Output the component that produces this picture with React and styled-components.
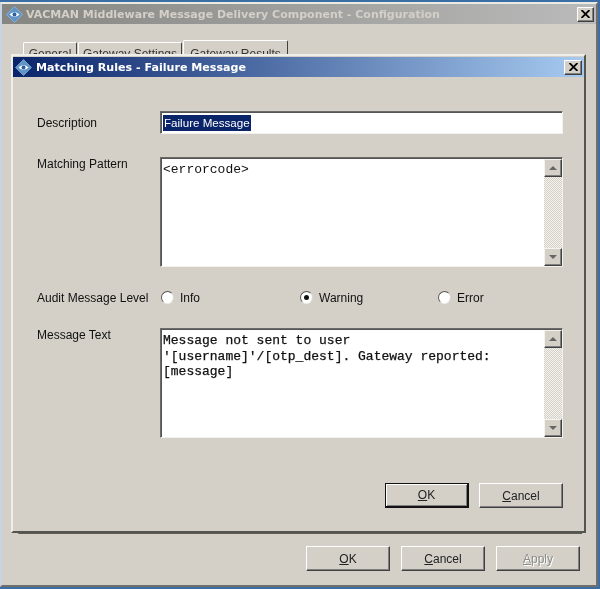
import React from 'react'
import styled, { createGlobalStyle } from 'styled-components'

const Global = createGlobalStyle`
    html, body {
        margin: 0;
        padding: 0;
        background: #3a6ea5;
    }
    body {
        font-family: "Liberation Sans", Arial, sans-serif;
        font-size: 12px;
        color: #111;
    }
`

function AppIcon() {
    return (
        <svg width="17" height="17" viewBox="0 0 17 17">
            <path d="M8.5 0.5 L16.5 8.5 L8.5 16.5 L0.5 8.5 Z" fill="#5f95c8" stroke="#9cc0e0" strokeWidth="0.6" />
            <path d="M3.5 8.5 Q8.5 3.8 13.5 8.5 Q8.5 13.2 3.5 8.5 Z" fill="#fff" />
            <circle cx="8.5" cy="8.5" r="2" fill="#2f5f96" />
        </svg>
    )
}

function CloseIcon() {
    return (
        <svg width="9" height="8" viewBox="0 0 9 8">
            <path d="M0.5 0 L8.5 8 M8.5 0 L0.5 8" stroke="#000" strokeWidth="1.8" fill="none" />
        </svg>
    )
}

function ScrollBar() {
    return (
        <Scroll>
            <ScrollButton><Arrow /></ScrollButton>
            <ScrollTrack />
            <ScrollButton><Arrow $down /></ScrollButton>
        </Scroll>
    )
}

function RadioOption({ label, checked, width }) {
    return (
        <Option $width={width}>
            <Radio $checked={checked} />
            <span>{label}</span>
        </Option>
    )
}

export default function App() {
    return (
        <>
            <Global />
            <Window>
                <TitleBar>
                    <AppIcon />
                    <TitleText>VACMAN Middleware Message Delivery Component - Configuration</TitleText>
                    <CloseButton><CloseIcon /></CloseButton>
                </TitleBar>
                <Tabs>
                    <Tab $width={54}>General</Tab>
                    <Tab $width={104}>Gateway Settings</Tab>
                    <Tab $width={105} $active>Gateway Results</Tab>
                </Tabs>
                <TabPanel />
                <Footer>
                    <Button><u>O</u>K</Button>
                    <Button><u>C</u>ancel</Button>
                    <Button $disabled><u>A</u>pply</Button>
                </Footer>

                <Dialog>
                    <DialogTitle>
                        <AppIcon />
                        <DialogTitleText>Matching Rules - Failure Message</DialogTitleText>
                        <DialogClose><CloseIcon /></DialogClose>
                    </DialogTitle>
                    <Form>
                        <Label $height={23}>Description</Label>
                        <TextField><Selected>Failure Message</Selected></TextField>

                        <Label>Matching Pattern</Label>
                        <TextArea>
                            <Mono>&lt;errorcode&gt;</Mono>
                            <ScrollBar />
                        </TextArea>

                        <Label $height={61}>Audit Message Level</Label>
                        <Options>
                            <RadioOption label="Info" width={139} />
                            <RadioOption label="Warning" width={138} checked />
                            <RadioOption label="Error" />
                        </Options>

                        <Label>Message Text</Label>
                        <TextArea>
                            <Mono $heavy>
                                Message not sent to user<br />
                                '[username]'/[otp_dest]. Gateway reported:<br />
                                [message]
                            </Mono>
                            <ScrollBar />
                        </TextArea>
                    </Form>
                    <DialogActions>
                        <Button $default><u>O</u>K</Button>
                        <Button><u>C</u>ancel</Button>
                    </DialogActions>
                </Dialog>
            </Window>
        </>
    )
}

const Window = styled.div`
    position: relative;
    box-sizing: border-box;
    width: 598px;
    height: 585px;
    margin-top: 2px;
    background: #d4d0c8;
    border: 2px solid;
    border-color: #eceae4 #6f6f6b #6f6f6b #c8d4e4;
    display: flex;
    flex-direction: column;
    filter: blur(0.5px);
`

const TitleBar = styled.div`
    height: 20px;
    flex: none;
    display: flex;
    align-items: center;
    gap: 3px;
    padding: 0 2px 0 4px;
    background: linear-gradient(to right, #858582, #bababa);
`

const TitleText = styled.div`
    flex: 1;
    font: bold 11px "DejaVu Sans", sans-serif;
    color: #d4d0c8;
    white-space: nowrap;
`

const CloseButton = styled.div`
    box-sizing: border-box;
    width: 17px;
    height: 15px;
    display: flex;
    align-items: center;
    justify-content: center;
    background: #d4d0c8;
    border: 1px solid;
    border-color: #fff #404040 #404040 #fff;
    box-shadow: inset -1px -1px 0 #808080;
`

const Tabs = styled.div`
    flex: none;
    display: flex;
    align-items: flex-end;
    gap: 1px;
    height: 21px;
    margin-top: 16px;
    padding-left: 21px;
`

const Tab = styled.div`
    box-sizing: border-box;
    width: ${p => p.$width}px;
    height: ${p => (p.$active ? 21 : 19)}px;
    padding-top: ${p => (p.$active ? 6 : 4)}px;
    color: #333;
    text-align: center;
    white-space: nowrap;
    overflow: hidden;
    border: 1px solid;
    border-color: #fff #404040 transparent #fff;
    border-bottom: none;
    border-radius: 2px 2px 0 0;
`

const TabPanel = styled.div`
    box-sizing: border-box;
    height: 473px;
    flex: none;
    margin: 0 14px 0 16px;
    border: 1px solid;
    border-color: #fff #404040 #5c5c58 #fff;
    border-bottom-width: 3px;
`

const Footer = styled.div`
    display: flex;
    justify-content: flex-end;
    gap: 11px;
    padding: 12px 16px 0 0;
`

const Button = styled.div`
    box-sizing: border-box;
    width: 84px;
    height: 25px;
    display: flex;
    align-items: center;
    justify-content: center;
    background: #d4d0c8;
    border: 1px solid;
    border-color: #fff #404040 #404040 #fff;
    box-shadow: inset -1px -1px 0 #808080;
    color: ${p => (p.$disabled ? '#8c8c88' : '#222')};
    text-shadow: ${p => (p.$disabled ? '1px 1px 0 #fff' : 'none')};
    ${p => p.$default && `
        border: 2px solid #111;
        border-top-width: 1px;
        border-left-width: 1px;
        box-shadow: inset 1px 1px 0 #fff, inset -1px -1px 0 #808080;
    `}
`

const Dialog = styled.div`
    position: absolute;
    left: 9px;
    top: 50px;
    box-sizing: border-box;
    width: 575px;
    height: 479px;
    background: #d4d0c8;
    border: 2px solid;
    border-color: #efeee9 #55554f #55554f #efeee9;
    display: flex;
    flex-direction: column;
`

const DialogTitle = styled.div`
    height: 20px;
    margin-top: 1px;
    flex: none;
    display: flex;
    align-items: center;
    gap: 4px;
    padding: 0 2px 0 2px;
    background: linear-gradient(to right, #0a246a, #a6caf0);
`

const DialogTitleText = styled.div`
    flex: 1;
    font: bold 11.1px "DejaVu Sans", sans-serif;
    color: #fff;
    white-space: nowrap;
`

const DialogClose = styled(CloseButton)`
    width: 18px;
`

const Form = styled.div`
    display: grid;
    grid-template-columns: 123px 403px;
    grid-template-rows: 46px 110px 61px 110px;
    padding: 34px 0 0 24px;
`

const Label = styled.div`
    box-sizing: border-box;
    display: flex;
    align-items: ${p => (p.$height ? 'center' : 'flex-start')};
    height: ${p => (p.$height ? `${p.$height}px` : 'auto')};
    white-space: nowrap;
`

const FieldBox = styled.div`
    box-sizing: border-box;
    background: #fff;
    border: 1px solid;
    border-color: #6a6a66 #f2f1ec #f2f1ec #6a6a66;
    box-shadow: inset 1px 1px 0 #555;
`

const TextField = styled(FieldBox)`
    height: 23px;
    padding: 3px 0 0 2px;
`

const Selected = styled.span`
    display: inline-block;
    background: #0a246a;
    color: #fff;
    font-size: 11.6px;
    line-height: 16px;
    padding: 0 1px;
`

const TextArea = styled(FieldBox)`
    height: 110px;
    display: flex;
    justify-content: space-between;
`

const Mono = styled.div`
    padding: 4px 0 0 2px;
    font: normal 13px/15.5px "Liberation Mono", monospace;
    white-space: nowrap;
    color: #111;
    -webkit-text-stroke: ${p => (p.$heavy ? '0.25px #111' : '0')};
`

const Scroll = styled.div`
    width: 18px;
    flex: none;
    margin-top: 1px;
    display: flex;
    flex-direction: column;
`

const ScrollButton = styled.div`
    box-sizing: border-box;
    height: 18px;
    flex: none;
    display: flex;
    align-items: center;
    justify-content: center;
    background: #d4d0c8;
    border: 1px solid;
    border-color: #f4f3ee #404040 #404040 #f4f3ee;
    box-shadow: inset -1px -1px 0 #808080;
`

const ScrollTrack = styled.div`
    flex: 1;
    background-color: #ebeae6;
    background-image: repeating-conic-gradient(#d4d0c8 0 25%, #f4f3ee 0 50%);
    background-size: 2px 2px;
`

const Arrow = styled.div`
    width: 0;
    height: 0;
    border-left: 4px solid transparent;
    border-right: 4px solid transparent;
    ${p => (p.$down ? 'border-top: 4px solid #666;' : 'border-bottom: 4px solid #666;')}
`

const Options = styled.div`
    display: flex;
    align-items: center;
    height: 61px;
    padding-left: 1px;
`

const Option = styled.div`
    display: flex;
    align-items: center;
    gap: 6px;
    width: ${p => (p.$width ? `${p.$width}px` : 'auto')};
`

const Radio = styled.div`
    box-sizing: border-box;
    width: 13px;
    height: 13px;
    flex: none;
    border-radius: 50%;
    background: #fff;
    border: 1px solid;
    border-color: #555 #d8d6d0 #eeede8 #555;
    display: flex;
    align-items: center;
    justify-content: center;
    &::after {
        content: "";
        display: ${p => (p.$checked ? 'block' : 'none')};
        width: 5px;
        height: 5px;
        border-radius: 50%;
        background: #111;
    }
`

const DialogActions = styled.div`
    display: flex;
    justify-content: flex-end;
    gap: 10px;
    padding: 45px 21px 0 0;
`
